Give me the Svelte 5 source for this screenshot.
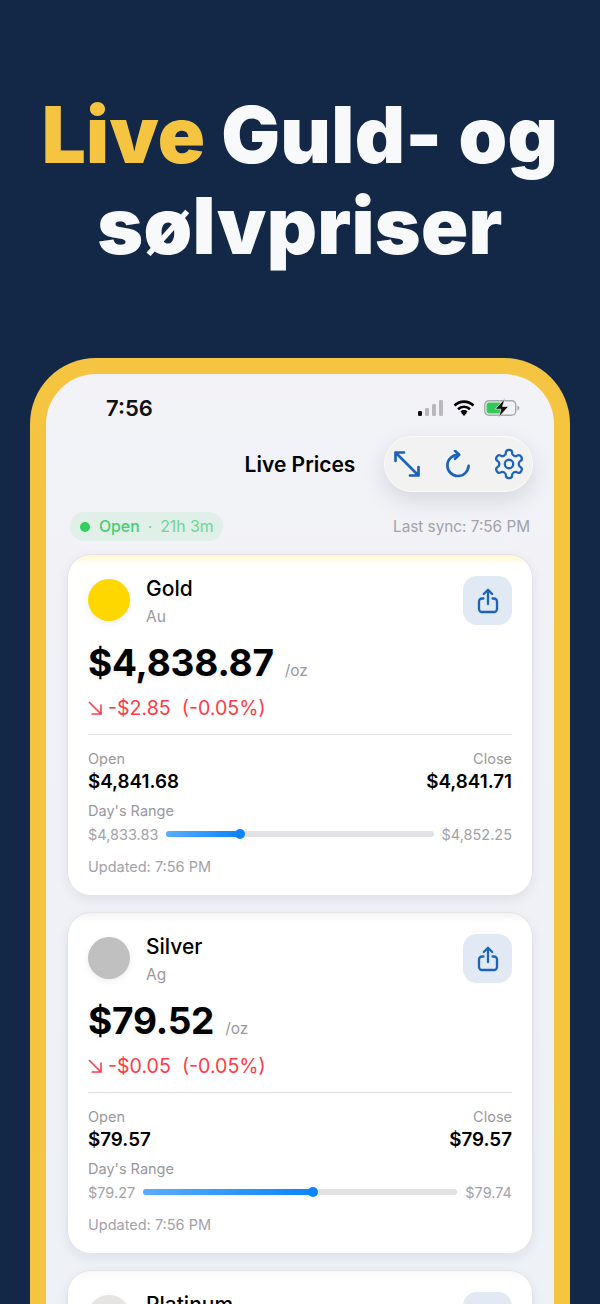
<script>
  const metals = [
    {
      name: "Gold", symbol: "Au", color: "#ffd700", glow: "#fff6cf",
      price: "$4,838.87", change: "-$2.85", pct: "(-0.05%)",
      open: "$4,841.68", close: "$4,841.71",
      low: "$4,833.83", high: "$4,852.25", pos: 27.4
    },
    {
      name: "Silver", symbol: "Ag", color: "#c0c0c0", glow: "#f4f4f4",
      price: "$79.52", change: "-$0.05", pct: "(-0.05%)",
      open: "$79.57", close: "$79.57",
      low: "$79.27", high: "$79.74", pos: 54
    },
    { name: "Platinum", symbol: "Pt", color: "#e5e4e2", glow: "#f8f8f8" }
  ];
</script>

<main class="page">
  <h1 class="headline"><span class="accent">Live</span> Guld- og<br />sølvpriser</h1>

  <section class="phone">
    <div class="screen">
      <div class="statusbar">
        <span class="time">7:56</span>
        <div class="status-icons">
          <svg width="26" height="17" viewBox="0 0 26 17" aria-hidden="true">
            <rect x="0" y="11" width="4" height="5" rx="1.2" fill="#111" />
            <rect x="7" y="8" width="4" height="8" rx="1.2" fill="#b9b9bd" />
            <rect x="14" y="4" width="4" height="12" rx="1.2" fill="#b9b9bd" />
            <rect x="21" y="0" width="4" height="16" rx="1.2" fill="#b9b9bd" />
          </svg>
          <svg width="22" height="16" viewBox="0 0 22 16" aria-hidden="true" fill="none" stroke="#000" stroke-width="2.6">
            <path d="M1.5 5.5a13.5 13.5 0 0 1 19 0" />
            <path d="M5 9.2a8.6 8.6 0 0 1 12 0" />
            <path d="M8.3 12.4a3.9 3.9 0 0 1 5.4 0" />
            <path d="M11 16l-2.7-3a3.9 3.9 0 0 1 5.4 0z" fill="#000" stroke="none" />
          </svg>
          <svg width="36" height="20" viewBox="0 0 36 20" aria-hidden="true">
            <rect x="0.7" y="2.7" width="31" height="14.6" rx="4.2" fill="none" stroke="#a9a9ad" stroke-width="1.4" />
            <rect x="2.6" y="4.6" width="15" height="10.8" rx="2.6" fill="#34c759" />
            <path d="M33.4 7.5c1.4.4 1.9 1.3 1.9 2.5s-.5 2.1-1.9 2.5z" fill="#a9a9ad" />
            <path d="M21 0.6 11.2 11.2h5.8l-2.4 8.2 9.9-11h-6z" fill="#111" stroke="#f2f2f7" stroke-width="0.7" />
          </svg>
        </div>
      </div>

      <header class="navbar">
        <h2 class="title">Live Prices</h2>
        <div class="actions">
          <svg width="26" height="26" viewBox="0 0 26 26" aria-hidden="true" class="icon">
            <path d="M1.5 1.5l23 23M1.5 10V1.5H10M24.5 16v8.5H16" />
          </svg>
          <svg width="24" height="28" viewBox="0 0 24 28" aria-hidden="true" class="icon refresh">
            <path d="M12 4.8A10.6 10.6 0 1 0 22.6 15.8" />
            <path d="M9 0.8l4.2 4-4.2 4" />
          </svg>
          <svg width="34" height="34" viewBox="0 0 24 24" aria-hidden="true" class="icon gear">
            <path d="M12.22 2h-.44a2 2 0 0 0-2 2v.18a2 2 0 0 1-1 1.73l-.43.25a2 2 0 0 1-2 0l-.15-.08a2 2 0 0 0-2.73.73l-.22.38a2 2 0 0 0 .73 2.73l.15.1a2 2 0 0 1 1 1.72v.51a2 2 0 0 1-1 1.74l-.15.09a2 2 0 0 0-.73 2.73l.22.38a2 2 0 0 0 2.73.73l.15-.08a2 2 0 0 1 2 0l.43.25a2 2 0 0 1 1 1.73V20a2 2 0 0 0 2 2h.44a2 2 0 0 0 2-2v-.18a2 2 0 0 1 1-1.73l.43-.25a2 2 0 0 1 2 0l.15.08a2 2 0 0 0 2.73-.73l.22-.39a2 2 0 0 0-.73-2.73l-.15-.08a2 2 0 0 1-1-1.74v-.5a2 2 0 0 1 1-1.74l.15-.09a2 2 0 0 0 .73-2.73l-.22-.38a2 2 0 0 0-2.73-.73l-.15.08a2 2 0 0 1-2 0l-.43-.25a2 2 0 0 1-1-1.73V4a2 2 0 0 0-2-2z" />
            <circle cx="12" cy="12" r="3" />
          </svg>
        </div>
      </header>

      <div class="market-row">
        <div class="market-pill">
          <span class="dot"></span>
          <span class="open-label">Open</span>
          <span class="sep">·</span>
          <span class="countdown">21h 3m</span>
        </div>
        <span class="sync">Last sync: 7:56 PM</span>
      </div>

      <div class="cards">
        {#each metals as m (m.name)}
          <article class="card" style="--glow: {m.glow}">
            <div class="card-head">
              <span class="coin" style="background: {m.color}"></span>
              <div class="names">
                <div class="name">{m.name}</div>
                <div class="symbol">{m.symbol}</div>
              </div>
              <button class="share" aria-label="Share {m.name}">
                <svg width="22" height="26" viewBox="0 0 22 26" aria-hidden="true" class="icon share-icon">
                  <path d="M6.5 10.5H5a3 3 0 0 0-3 3v7.5a3 3 0 0 0 3 3h12a3 3 0 0 0 3-3v-7.5a3 3 0 0 0-3-3h-1.5" />
                  <path d="M11 16V2M6.8 6L11 1.8 15.2 6" />
                </svg>
              </button>
            </div>

            {#if m.price}
              <div class="price-row">
                <span class="price">{m.price}</span>
                <span class="unit">/oz</span>
              </div>
              <div class="change">
                <svg width="14" height="14" viewBox="0 0 14 14" aria-hidden="true" class="arrow">
                  <path d="M1 1l12 12M3.5 13H13V3.5" />
                </svg>
                <span>{m.change}</span>
                <span class="pct">{m.pct}</span>
              </div>

              <div class="stats">
                <div>
                  <div class="label">Open</div>
                  <div class="value">{m.open}</div>
                </div>
                <div class="right">
                  <div class="label">Close</div>
                  <div class="value">{m.close}</div>
                </div>
              </div>

              <div class="label range-label">Day's Range</div>
              <div class="range">
                <span class="bound">{m.low}</span>
                <div class="track">
                  <div class="fill" style="width: {m.pos}%"></div>
                  <div class="thumb" style="left: {m.pos}%"></div>
                </div>
                <span class="bound">{m.high}</span>
              </div>

              <div class="updated">Updated: 7:56 PM</div>
            {/if}
          </article>
        {/each}
      </div>
    </div>
  </section>
</main>

<style>
  :global(body) {
    margin: 0;
    background: #132847;
  }
  .page {
    height: 1304px;
    overflow: hidden;
    background: #132847;
    font-family: Inter, "Liberation Sans", sans-serif;
    color: #000;
  }
  .headline {
    margin: 0;
    padding-top: 89px;
    height: 269px;
    text-align: center;
    font-size: 78px;
    line-height: 91px;
    font-weight: 900;
    letter-spacing: 0.3px;
    white-space: nowrap;
    color: #f8f9fb;
  }
  .accent { color: #f5c542; }

  .phone {
    margin: 0 30px;
    height: 980px;
    padding: 16px 16px 0;
    background: #f5c542;
    border-radius: 66px 66px 0 0;
  }
  .screen {
    height: 964px;
    border-radius: 50px 50px 0 0;
    background: linear-gradient(#f2f2f7, #eef1f6);
    overflow: hidden;
    padding: 0 22px;
  }

  .statusbar {
    height: 62px;
    display: flex;
    align-items: center;
    justify-content: space-between;
    padding: 6px 12px 0 38px;
    box-sizing: border-box;
  }
  .time { font-size: 22px; font-weight: 600; color: #111; }
  .status-icons { display: flex; align-items: center; gap: 9px; }

  .navbar {
    position: relative;
    height: 56px;
    display: flex;
    align-items: center;
    justify-content: center;
  }
  .title { margin: 0; font-size: 21px; font-weight: 600; color: #000; }
  .actions {
    position: absolute;
    right: -1px;
    top: 0;
    width: 149px;
    height: 56px;
    box-sizing: border-box;
    padding: 0 0 0 9px;
    display: flex;
    align-items: center;
    border-radius: 28px;
    background: #f2f2f3;
    border: 1px solid #fafafa;
    box-shadow: 0 8px 22px rgba(30, 40, 70, 0.13);
  }
  .icon {
    fill: none;
    stroke: #1e63b8;
    stroke-width: 2.7;
    stroke-linecap: round;
    stroke-linejoin: round;
    flex: none;
  }
  .refresh { margin: 0 22px 0 26px; }
  .gear { stroke-width: 1.6; }

  .market-row {
    margin-top: 20px;
    height: 29px;
    display: flex;
    align-items: center;
    justify-content: space-between;
    padding: 0 2px;
  }
  .market-pill {
    height: 29px;
    width: 153px;
    box-sizing: border-box;
    padding: 0 10px;
    display: flex;
    align-items: center;
    white-space: nowrap;
    background: #e1efe9;
    border-radius: 14.5px;
    font-size: 15.8px;
  }
  .dot {
    width: 10px;
    height: 10px;
    border-radius: 50%;
    background: #30d158;
    margin-right: 9px;
    flex: none;
  }
  .open-label { color: #46cc72; font-weight: 500; }
  .sep { color: #6fd596; margin: 0 8px; }
  .countdown { color: #6fd596; }
  .sync { font-size: 15.3px; color: #a2a2a8; }

  .cards {
    margin-top: 13px;
    margin-inline: -1px;
    display: flex;
    flex-direction: column;
    gap: 16px;
  }
  .card {
    height: 342px;
    box-sizing: border-box;
    padding: 21px 20px 0;
    background: linear-gradient(var(--glow), #fff 10px);
    border: 1px solid #e4e4e8;
    border-radius: 24px;
    box-shadow: 0 4px 12px rgba(30, 40, 70, 0.08);
  }
  .card-head {
    display: flex;
    align-items: flex-start;
    height: 68px;
  }
  .coin {
    width: 42px;
    height: 42px;
    margin-top: 3px;
    border-radius: 50%;
    box-shadow: 0 2px 6px rgba(0, 0, 0, 0.08);
    flex: none;
  }
  .names { margin-left: 16px; flex: 1; }
  .name { font-size: 21px; line-height: 26px; font-weight: 500; }
  .symbol { font-size: 15.5px; line-height: 20px; color: #98989e; margin-top: 5px; }
  .share {
    width: 49px;
    height: 49px;
    padding: 0;
    border: 0;
    border-radius: 14px;
    background: #e0e9f4;
    display: flex;
    align-items: center;
    justify-content: center;
  }
  .share-icon { stroke-width: 2.3; }

  .price-row {
    display: flex;
    align-items: baseline;
    height: 50px;
    line-height: 50px;
    margin-top: -6px;
  }
  .price {
    font-size: 37px;
    font-weight: 700;
    letter-spacing: -0.2px;
    text-shadow: 0 2px 5px rgba(0, 0, 0, 0.07);
  }
  .unit { font-size: 15.5px; color: #98989e; margin-left: 11px; }

  .change {
    display: flex;
    align-items: center;
    height: 26px;
    margin-top: 7px;
    font-size: 19.6px;
    color: #ff3b47;
  }
  .arrow {
    fill: none;
    stroke: #ff3b47;
    stroke-width: 1.6;
    margin-right: 6px;
    flex: none;
  }
  .pct { margin-left: 11px; }

  .stats {
    margin-top: 13px;
    padding-top: 15px;
    border-top: 1px solid #e3e3e5;
    display: flex;
    justify-content: space-between;
  }
  .right { text-align: right; }
  .label { font-size: 14.5px; line-height: 18px; color: #98989e; }
  .value { font-size: 18.8px; line-height: 24px; font-weight: 600; margin-top: 2px; }
  .range-label { margin-top: 8px; }

  .range {
    display: flex;
    align-items: center;
    gap: 8px;
    height: 22px;
    margin-top: 3px;
  }
  .bound { font-size: 14.5px; color: #a2a2a8; }
  .track {
    position: relative;
    flex: 1;
    height: 6px;
    border-radius: 3px;
    background: #e2e2e4;
  }
  .fill {
    height: 100%;
    border-radius: 3px;
    background: linear-gradient(90deg, #5aaefc, #0a84ff);
  }
  .thumb {
    position: absolute;
    top: 50%;
    width: 10px;
    height: 10px;
    border-radius: 50%;
    background: #0a84ff;
    transform: translate(-50%, -50%);
  }
  .updated {
    margin-top: 13px;
    font-size: 14.5px;
    line-height: 18px;
    color: #a2a2a8;
  }
</style>
